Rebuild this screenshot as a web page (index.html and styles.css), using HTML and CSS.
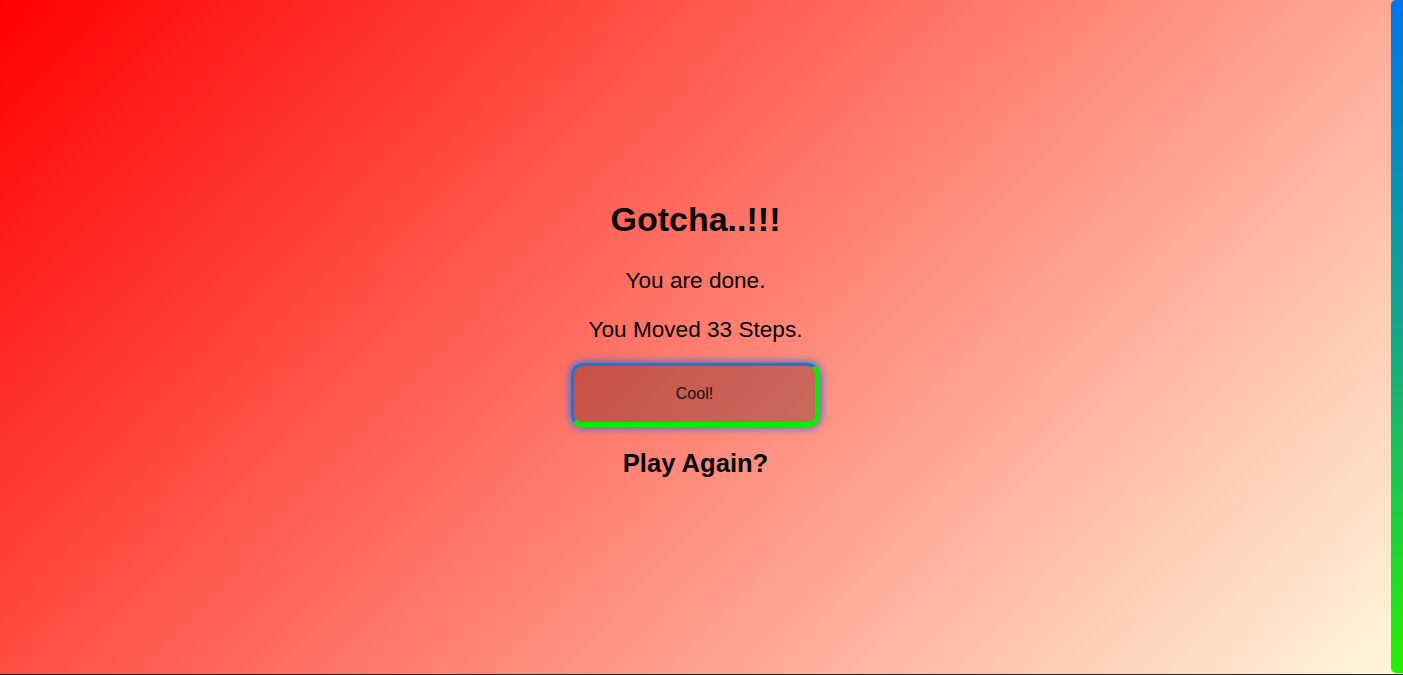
FILE: index.html
```html
<!DOCTYPE html>
<html lang="en">
<head>
<meta charset="utf-8">
<title>Gotcha</title>
<link rel="stylesheet" href="styles.css">
</head>
<body>
<div class="page">
  <main class="screen">
    <section class="result">
      <h1 class="title">Gotcha..!!!</h1>
      <p class="line">You are done.</p>
      <p class="line">You Moved 33 Steps.</p>
      <button class="cool" type="button">Cool!</button>
      <h2 class="again">Play Again?</h2>
    </section>
  </main>
  <div class="scrollbar" aria-hidden="true"><div class="thumb"></div></div>
</div>
</body>
</html>
```

FILE: styles.css
```css
body {
  margin: 0;
  font-family: "Liberation Sans", Arial, sans-serif;
  color: #050505;
  overflow: hidden;
}
.page {
  box-sizing: border-box;
  height: 100vh;
  display: flex;
  border-bottom: 1px solid #2a2420;
  background: linear-gradient(133deg, #ff0000, #fff8dc);
}
.screen {
  flex: 1;
  display: flex;
  align-items: center;
  justify-content: center;
}
.scrollbar {
  width: 12px;
  display: flex;
  padding-bottom: 1px;
}
.thumb {
  flex: 1;
  border-radius: 5px 0 0 5px;
  background: linear-gradient(to bottom, #0074ea, #14a888 50%, #26f000);
}
.result {
  text-align: center;
  display: flex;
  flex-direction: column;
  align-items: center;
  padding-top: 4px;
}
.title {
  font-size: 34px;
  font-weight: bold;
  margin: 0 0 29px;
  line-height: 39px;
}
.line {
  font-size: 22.6px;
  line-height: 26px;
  margin: 0 0 23px;
}
.line + .line {
  margin-bottom: 20px;
}
.cool {
  box-sizing: border-box;
  width: 249px;
  height: 64px;
  border-style: solid;
  border-width: 3px 5px 5px 3px;
  border-color: #1a74dc #00f000 #00f000 #1a74dc;
  border-radius: 12px;
  background: rgba(60, 0, 0, 0.28);
  box-shadow: 0 0 8px 1px #2d74d6;
  font-family: "Liberation Sans", Arial, sans-serif;
  font-size: 16px;
  color: #111;
  padding: 0;
  cursor: pointer;
}
.again {
  font-size: 25.6px;
  line-height: 30px;
  font-weight: bold;
  margin: 21px 0 0;
}
```
